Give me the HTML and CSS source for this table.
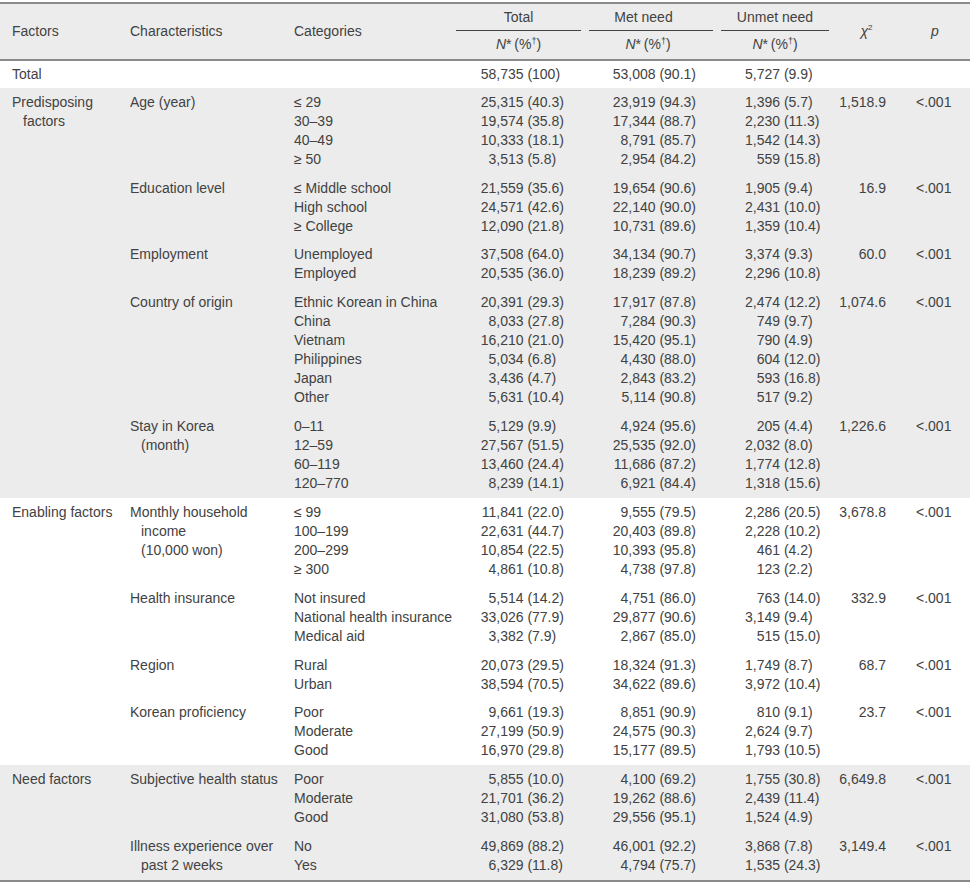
FILE: index.html
```html
<!DOCTYPE html>
<html>
<head>
<meta charset="utf-8">
<link rel="stylesheet" href="styles.css">
</head>
<body>
<table class="tbl">
<colgroup>
<col class="c1"><col class="c2"><col class="c3"><col class="c4"><col class="c5"><col class="c6"><col class="c7"><col class="c8">
</colgroup>
<thead>
<tr>
<th rowspan="2" class="lh">Factors</th>
<th rowspan="2" class="lh">Characteristics</th>
<th rowspan="2" class="lh">Categories</th>
<th class="grp"><div>Total</div></th>
<th class="grp met"><div>Met need</div></th>
<th class="grp"><div>Unmet need</div></th>
<th rowspan="2" class="ch"><i>χ</i><sup>2</sup></th>
<th rowspan="2" class="ch"><i>p</i></th>
</tr>
<tr>
<th class="sub"><i>N</i>*&#8201;(%<sup>†</sup>)</th>
<th class="sub met2"><i>N</i>*&#8201;(%<sup>†</sup>)</th>
<th class="sub"><i>N</i>*&#8201;(%<sup>†</sup>)</th>
</tr>
</thead>
<tbody class="plain total">
<tr>
<td class="f">Total</td><td></td><td></td>
<td class="tot"><div><span class="n">58,735</span> (100)</div></td>
<td class="met"><div>53,008 (90.1)</div></td>
<td class="un"><div><span class="n">5,727</span> (9.9)</div></td>
<td class="chi"></td><td class="pv"></td>
</tr>
</tbody>
<tbody class="shade">
<tr>
<td class="f hang">Predisposing<br>factors</td>
<td class="hang">Age (year)</td>
<td><div>≤ 29</div><div>30–39</div><div>40–49</div><div>≥ 50</div></td>
<td class="tot"><div><span class="n">25,315</span> (40.3)</div><div><span class="n">19,574</span> (35.8)</div><div><span class="n">10,333</span> (18.1)</div><div><span class="n">3,513</span> (5.8)</div></td>
<td class="met"><div>23,919 (94.3)</div><div>17,344 (88.7)</div><div>8,791 (85.7)</div><div>2,954 (84.2)</div></td>
<td class="un"><div><span class="n">1,396</span> (5.7)</div><div><span class="n">2,230</span> (11.3)</div><div><span class="n">1,542</span> (14.3)</div><div><span class="n">559</span> (15.8)</div></td>
<td class="chi">1,518.9</td><td class="pv">&lt;.001</td>
</tr>
<tr>
<td class="f"></td>
<td class="hang">Education level</td>
<td><div>≤ Middle school</div><div>High school</div><div>≥ College</div></td>
<td class="tot"><div><span class="n">21,559</span> (35.6)</div><div><span class="n">24,571</span> (42.6)</div><div><span class="n">12,090</span> (21.8)</div></td>
<td class="met"><div>19,654 (90.6)</div><div>22,140 (90.0)</div><div>10,731 (89.6)</div></td>
<td class="un"><div><span class="n">1,905</span> (9.4)</div><div><span class="n">2,431</span> (10.0)</div><div><span class="n">1,359</span> (10.4)</div></td>
<td class="chi">16.9</td><td class="pv">&lt;.001</td>
</tr>
<tr>
<td class="f"></td>
<td class="hang">Employment</td>
<td><div>Unemployed</div><div>Employed</div></td>
<td class="tot"><div><span class="n">37,508</span> (64.0)</div><div><span class="n">20,535</span> (36.0)</div></td>
<td class="met"><div>34,134 (90.7)</div><div>18,239 (89.2)</div></td>
<td class="un"><div><span class="n">3,374</span> (9.3)</div><div><span class="n">2,296</span> (10.8)</div></td>
<td class="chi">60.0</td><td class="pv">&lt;.001</td>
</tr>
<tr>
<td class="f"></td>
<td class="hang">Country of origin</td>
<td><div>Ethnic Korean in China</div><div>China</div><div>Vietnam</div><div>Philippines</div><div>Japan</div><div>Other</div></td>
<td class="tot"><div><span class="n">20,391</span> (29.3)</div><div><span class="n">8,033</span> (27.8)</div><div><span class="n">16,210</span> (21.0)</div><div><span class="n">5,034</span> (6.8)</div><div><span class="n">3,436</span> (4.7)</div><div><span class="n">5,631</span> (10.4)</div></td>
<td class="met"><div>17,917 (87.8)</div><div>7,284 (90.3)</div><div>15,420 (95.1)</div><div>4,430 (88.0)</div><div>2,843 (83.2)</div><div>5,114 (90.8)</div></td>
<td class="un"><div><span class="n">2,474</span> (12.2)</div><div><span class="n">749</span> (9.7)</div><div><span class="n">790</span> (4.9)</div><div><span class="n">604</span> (12.0)</div><div><span class="n">593</span> (16.8)</div><div><span class="n">517</span> (9.2)</div></td>
<td class="chi">1,074.6</td><td class="pv">&lt;.001</td>
</tr>
<tr>
<td class="f"></td>
<td class="hang">Stay in Korea<br>(month)</td>
<td><div>0–11</div><div>12–59</div><div>60–119</div><div>120–770</div></td>
<td class="tot"><div><span class="n">5,129</span> (9.9)</div><div><span class="n">27,567</span> (51.5)</div><div><span class="n">13,460</span> (24.4)</div><div><span class="n">8,239</span> (14.1)</div></td>
<td class="met"><div>4,924 (95.6)</div><div>25,535 (92.0)</div><div>11,686 (87.2)</div><div>6,921 (84.4)</div></td>
<td class="un"><div><span class="n">205</span> (4.4)</div><div><span class="n">2,032</span> (8.0)</div><div><span class="n">1,774</span> (12.8)</div><div><span class="n">1,318</span> (15.6)</div></td>
<td class="chi">1,226.6</td><td class="pv">&lt;.001</td>
</tr>
</tbody>
<tbody class="plain">
<tr>
<td class="f hang">Enabling factors</td>
<td class="hang">Monthly household<br>income<br>(10,000 won)</td>
<td><div>≤ 99</div><div>100–199</div><div>200–299</div><div>≥ 300</div></td>
<td class="tot"><div><span class="n">11,841</span> (22.0)</div><div><span class="n">22,631</span> (44.7)</div><div><span class="n">10,854</span> (22.5)</div><div><span class="n">4,861</span> (10.8)</div></td>
<td class="met"><div>9,555 (79.5)</div><div>20,403 (89.8)</div><div>10,393 (95.8)</div><div>4,738 (97.8)</div></td>
<td class="un"><div><span class="n">2,286</span> (20.5)</div><div><span class="n">2,228</span> (10.2)</div><div><span class="n">461</span> (4.2)</div><div><span class="n">123</span> (2.2)</div></td>
<td class="chi">3,678.8</td><td class="pv">&lt;.001</td>
</tr>
<tr>
<td class="f"></td>
<td class="hang">Health insurance</td>
<td><div>Not insured</div><div>National health insurance</div><div>Medical aid</div></td>
<td class="tot"><div><span class="n">5,514</span> (14.2)</div><div><span class="n">33,026</span> (77.9)</div><div><span class="n">3,382</span> (7.9)</div></td>
<td class="met"><div>4,751 (86.0)</div><div>29,877 (90.6)</div><div>2,867 (85.0)</div></td>
<td class="un"><div><span class="n">763</span> (14.0)</div><div><span class="n">3,149</span> (9.4)</div><div><span class="n">515</span> (15.0)</div></td>
<td class="chi">332.9</td><td class="pv">&lt;.001</td>
</tr>
<tr>
<td class="f"></td>
<td class="hang">Region</td>
<td><div>Rural</div><div>Urban</div></td>
<td class="tot"><div><span class="n">20,073</span> (29.5)</div><div><span class="n">38,594</span> (70.5)</div></td>
<td class="met"><div>18,324 (91.3)</div><div>34,622 (89.6)</div></td>
<td class="un"><div><span class="n">1,749</span> (8.7)</div><div><span class="n">3,972</span> (10.4)</div></td>
<td class="chi">68.7</td><td class="pv">&lt;.001</td>
</tr>
<tr>
<td class="f"></td>
<td class="hang">Korean proficiency</td>
<td><div>Poor</div><div>Moderate</div><div>Good</div></td>
<td class="tot"><div><span class="n">9,661</span> (19.3)</div><div><span class="n">27,199</span> (50.9)</div><div><span class="n">16,970</span> (29.8)</div></td>
<td class="met"><div>8,851 (90.9)</div><div>24,575 (90.3)</div><div>15,177 (89.5)</div></td>
<td class="un"><div><span class="n">810</span> (9.1)</div><div><span class="n">2,624</span> (9.7)</div><div><span class="n">1,793</span> (10.5)</div></td>
<td class="chi">23.7</td><td class="pv">&lt;.001</td>
</tr>
</tbody>
<tbody class="shade">
<tr>
<td class="f hang">Need factors</td>
<td class="hang">Subjective health status</td>
<td><div>Poor</div><div>Moderate</div><div>Good</div></td>
<td class="tot"><div><span class="n">5,855</span> (10.0)</div><div><span class="n">21,701</span> (36.2)</div><div><span class="n">31,080</span> (53.8)</div></td>
<td class="met"><div>4,100 (69.2)</div><div>19,262 (88.6)</div><div>29,556 (95.1)</div></td>
<td class="un"><div><span class="n">1,755</span> (30.8)</div><div><span class="n">2,439</span> (11.4)</div><div><span class="n">1,524</span> (4.9)</div></td>
<td class="chi">6,649.8</td><td class="pv">&lt;.001</td>
</tr>
<tr>
<td class="f"></td>
<td class="hang">Illness experience over<br>past 2 weeks</td>
<td><div>No</div><div>Yes</div></td>
<td class="tot"><div><span class="n">49,869</span> (88.2)</div><div><span class="n">6,329</span> (11.8)</div></td>
<td class="met"><div>46,001 (92.2)</div><div>4,794 (75.7)</div></td>
<td class="un"><div><span class="n">3,868</span> (7.8)</div><div><span class="n">1,535</span> (24.3)</div></td>
<td class="chi">3,149.4</td><td class="pv">&lt;.001</td>
</tr>
</tbody>
</table>
</body>
</html>
```
FILE: styles.css
```css
html, body {
  margin: 0;
  padding: 0;
  background: #ffffff;
}
body {
  font-family: "Liberation Sans", Arial, sans-serif;
  font-size: 14px;
  line-height: 19.1px;
  color: #424242;
}
.tbl {
  width: 970px;
  margin-top: 2px;
  border-collapse: collapse;
  table-layout: fixed;
  border-top: 2px solid #8a8a8a;
  border-bottom: 2px solid #8a8a8a;
}
.c1 { width: 118px; }
.c2 { width: 164px; }
.c3 { width: 170px; }
.c4 { width: 133px; }
.c5 { width: 132px; }
.c6 { width: 116px; }
.c7 { width: 67px; }
.c8 { width: 70px; }

thead tr { background: #ececec; }
thead { border-bottom: 2px solid #8a8a8a; }
th {
  font-weight: normal;
  padding: 0;
  vertical-align: middle;
}
th.lh { text-align: left; padding-left: 12px; }
th.grp { padding: 3.5px 4px 0 4px; text-align: center; }
th.grp div { padding-bottom: 3.6px; border-bottom: 1px solid #444; }
th.grp.met div { padding-right: 15px; }
th.sub { padding: 3.5px 4px 5px 4px; text-align: center; }
th.met2 { padding-right: 10px; }
th.ch { text-align: center; }
th sup { font-size: 9px; line-height: 0; vertical-align: 5px; }
th.ch sup { vertical-align: 6px; font-size: 8px; }

td {
  padding-top: 4.75px;
  padding-bottom: 4.75px;
  padding-left: 0;
  padding-right: 0;
  vertical-align: top;
  white-space: nowrap;
}
td:nth-child(3) { padding-left: 12px; }
tbody.total td { padding-top: 4px; padding-bottom: 4px; }
tbody.shade tr { background: #ececec; }
tbody.plain tr { background: #ffffff; }
td.f { padding-left: 12px; }
td.hang { padding-left: 23px; text-indent: -11px; }
td.f.hang { padding-left: 23px; }
td.hang div { text-indent: 0; }
td.tot { padding-left: 10px; }
td.un { padding-left: 10px; }
td.tot .n { display: inline-block; width: 61.5px; text-align: right; }
td.un .n { display: inline-block; width: 53px; text-align: right; }
td.met { text-align: right; padding-right: 21px; }
td.chi { text-align: right; padding-right: 14px; }
td.pv { padding-left: 16px; }
```
